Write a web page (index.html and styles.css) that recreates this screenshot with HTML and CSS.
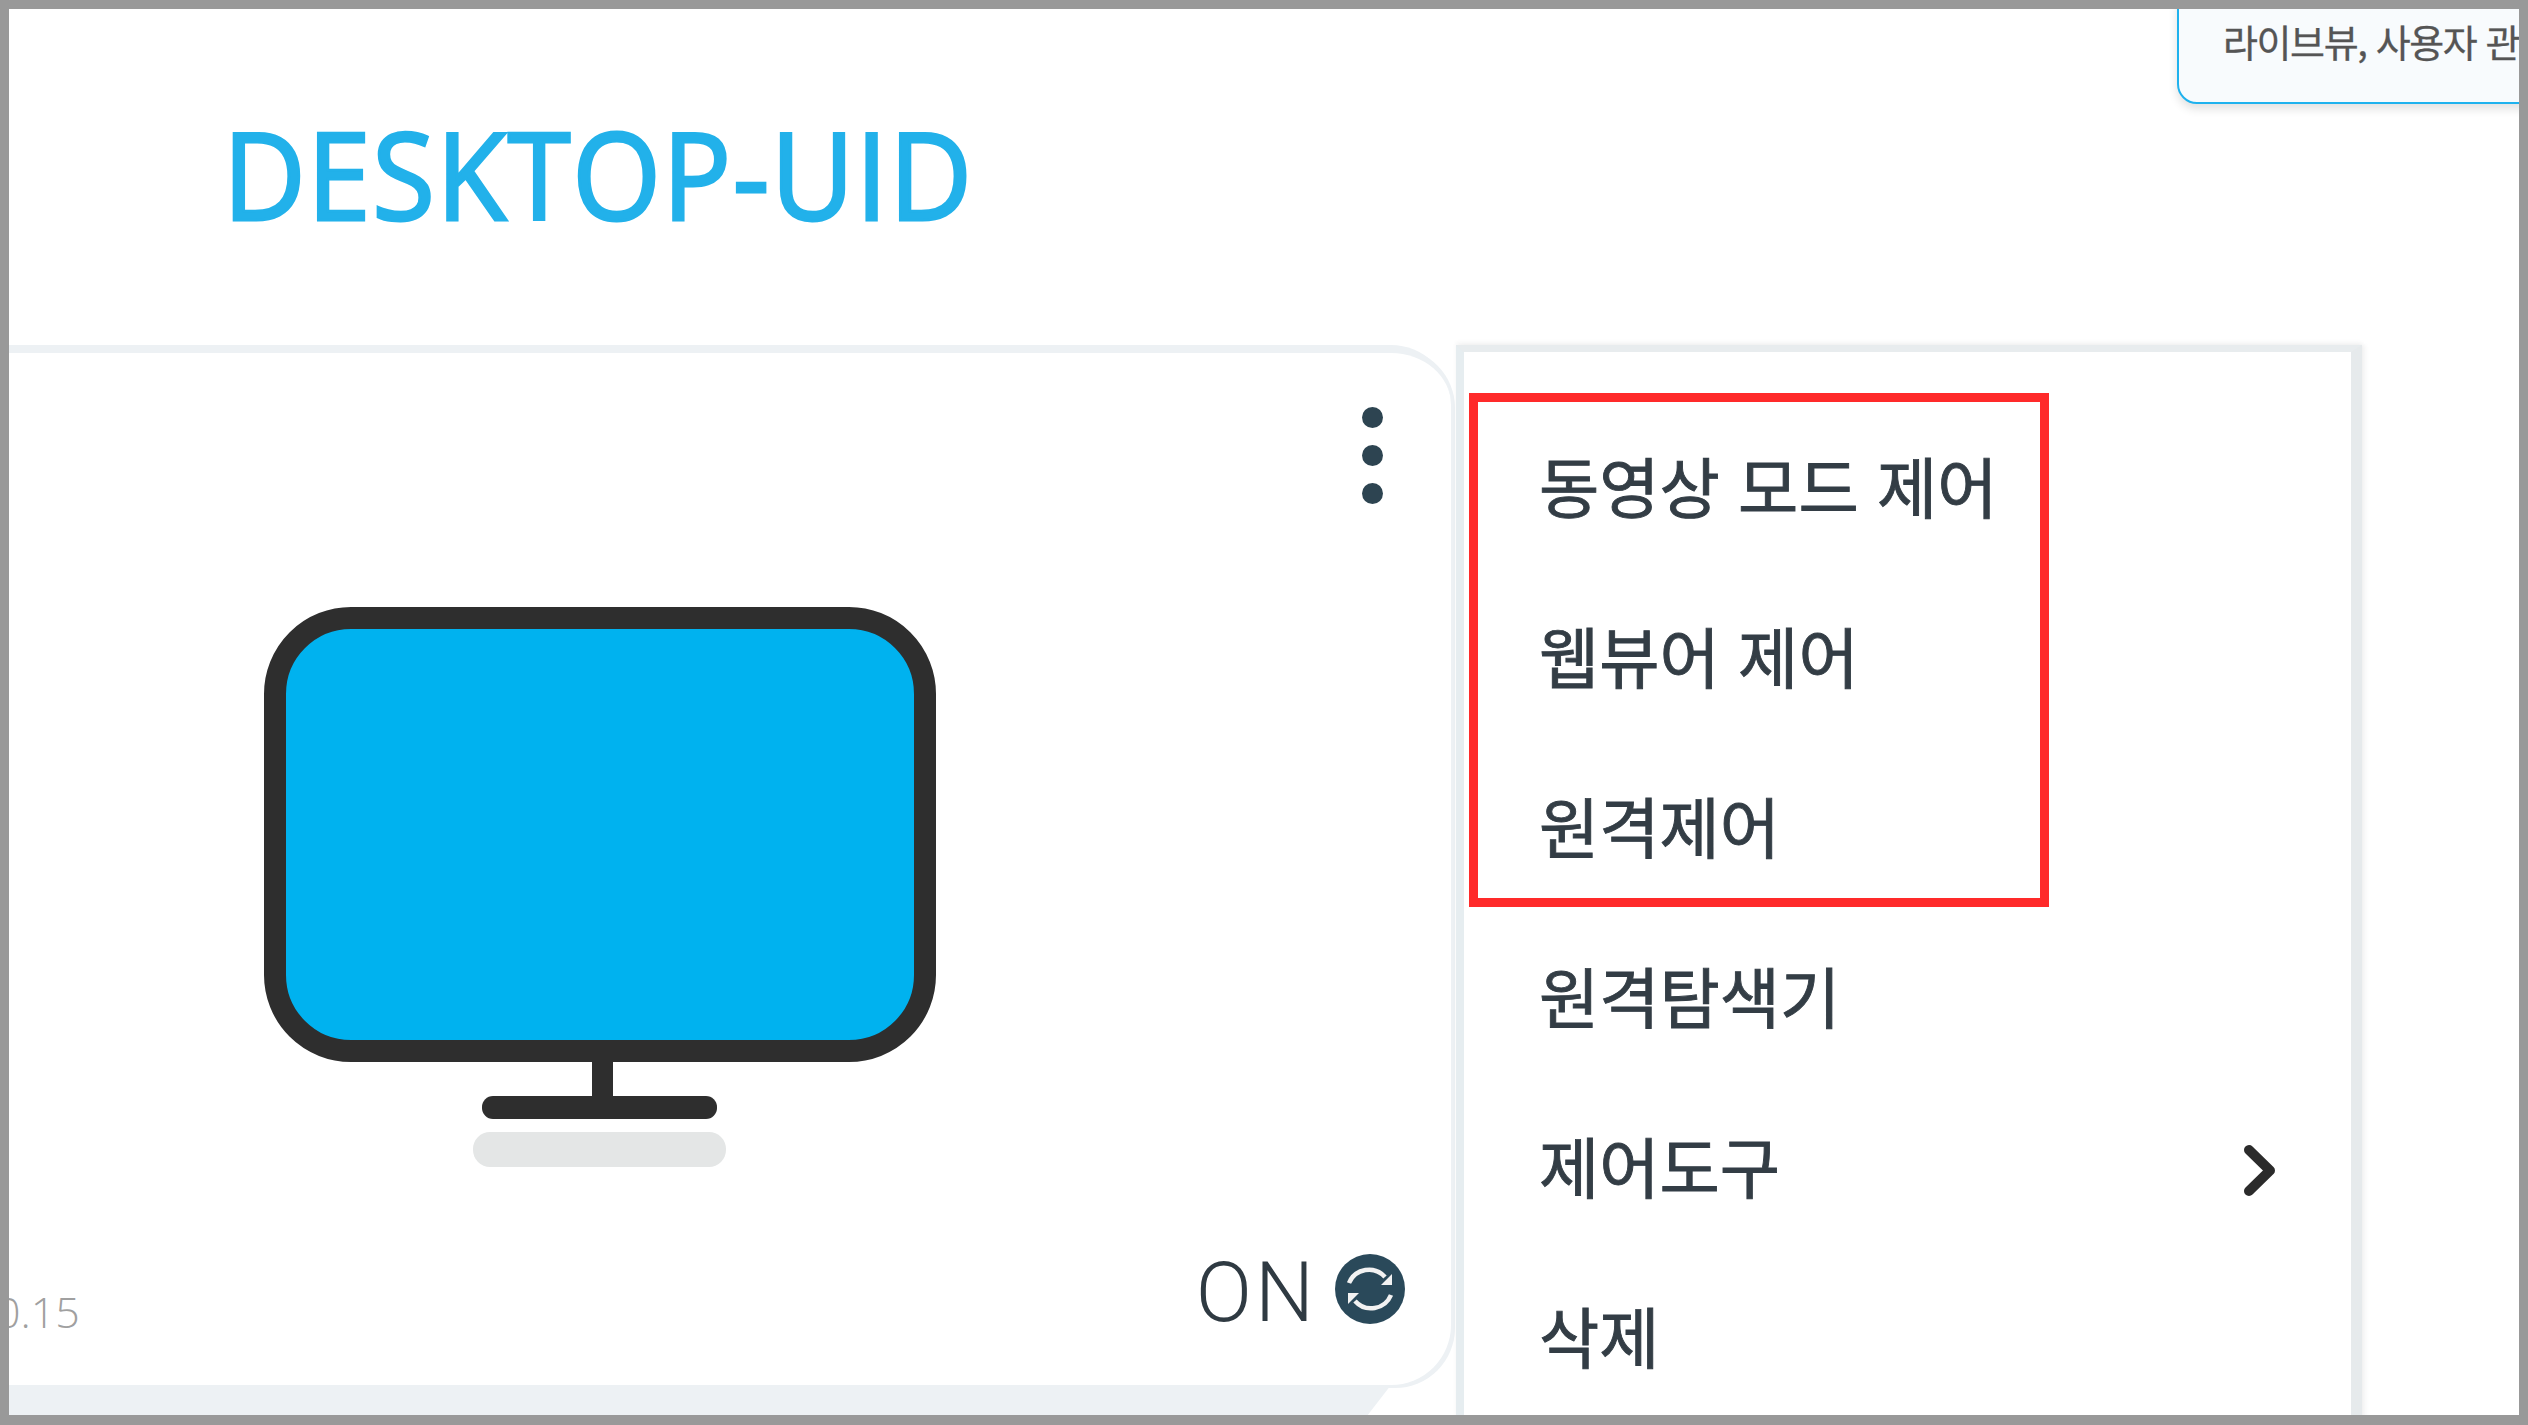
FILE: index.html
```html
<!DOCTYPE html>
<html lang="ko">
<head>
    <meta charset="UTF-8">
    <title>DESKTOP-UID</title>
    <link rel="stylesheet" href="styles.css">
</head>
<body>
    <div class="frame">
        <div class="tooltip">라이브뷰, 사용자 관리</div>
        <div class="header">
            <h1 class="device-name">DESKTOP-UID</h1>
        </div>
        <div class="content">
            <div class="device-card">
                <div class="kebab"><span></span><span></span><span></span></div>
                <svg class="monitor" viewBox="0 0 672 560" width="672" height="560">
                    <rect x="11" y="11" width="650" height="433" rx="76" fill="#00b2ef" stroke="#2e2e2e" stroke-width="22"/>
                    <rect x="328" y="450" width="21" height="44" fill="#2e2e2e"/>
                    <rect x="218" y="489" width="235" height="23" rx="11" fill="#2e2e2e"/>
                    <rect x="209" y="525" width="253" height="35" rx="17" fill="#e4e6e6"/>
                </svg>
                <div class="card-footer">
                    <span class="ip">0.15</span>
                    <div class="status">
                        <span class="status-text">ON</span>
                        <svg class="refresh" viewBox="0 0 70 70" width="70" height="70">
                            <circle cx="35" cy="35" r="35" fill="#2a495a"/>
                            <path d="M14 29A21.500 21.500 0 0 1 50 23" fill="none" stroke="#f2f2f2" stroke-width="4.500"/>
                            <path d="M56 41A21.500 21.500 0 0 1 20 47" fill="none" stroke="#f2f2f2" stroke-width="4.500"/>
                            <path d="M57 20v11h-11z" fill="#f2f2f2"/>
                            <path d="M13 50v-11h11z" fill="#f2f2f2"/>
                        </svg>
                    </div>
                </div>
            </div>
            <div class="menu">
                <div class="highlight"></div>
                <div class="menu-item">동영상 모드 제어</div>
                <div class="menu-item">웹뷰어 제어</div>
                <div class="menu-item">원격제어</div>
                <div class="menu-item">원격탐색기</div>
                <div class="menu-item">
                    제어도구
                    <svg class="chevron" viewBox="0 0 33 51" width="33" height="51">
                        <path d="M6 5l21 20.500-21 20.500" fill="none" stroke="#2b2b2b" stroke-width="10" stroke-linecap="round" stroke-linejoin="round"/>
                    </svg>
                </div>
                <div class="menu-item">삭제</div>
            </div>
        </div>
    </div>
</body>
</html>
```

FILE: styles.css
```css
html, body {
    margin: 0;
    padding: 0;
}
body {
    width: 2528px;
    height: 1425px;
    overflow: hidden;
    background-color: #999;
    font-family: "Noto Sans CJK KR", "Noto Sans", sans-serif;
}
.frame {
    position: relative;
    margin: 9px 0 0 9px;
    width: 2510px;
    height: 1406px;
    overflow: hidden;
    background-color: #fff;
}
.tooltip {
    position: absolute;
    top: -20px;
    left: 2168px;
    width: 420px;
    height: 115px;
    box-sizing: border-box;
    padding: 28px 0 0 44px;
    background-color: #f8fbfd;
    border: 2px solid #1fb2ee;
    border-radius: 20px;
    box-shadow: 0 5px 10px rgba(0,0,0,0.12);
    color: #555;
    font-size: 38px;
    line-height: 44px;
    letter-spacing: -1.4px;
    white-space: nowrap;
    -webkit-text-stroke: 0.3px #555;
}
.header {
    height: 336px;
    padding-left: 214px;
}
.device-name {
    margin: 0;
    padding-top: 90px;
    color: #22b1ea;
    font-family: "Open Sans", sans-serif;
    font-size: 120px;
    font-weight: 400;
    line-height: 150px;
    letter-spacing: 1.7px;
    -webkit-text-stroke: 3px #22b1ea;
    transform: scaleX(0.95);
    transform-origin: left center;
}
.content {
    display: flex;
    align-items: flex-start;
}
.device-card {
    position: relative;
    flex: none;
    width: 1522px;
    height: 1040px;
    margin-left: -80px;
    box-sizing: border-box;
    background-color: #fff;
    border-top: 8px solid #edf1f4;
    border-radius: 0 60px 60px 0;
    box-shadow: 4px 3px 0 #edf1f4;
}
/* band under the card, runs off the bottom of the shot */
.device-card::after {
    content: "";
    position: absolute;
    top: 100%;
    left: 0;
    right: 60px;
    height: 31px;
    background-color: #edf1f4;
    clip-path: polygon(0 0, 100% 0, calc(100% - 24px) 100%, 0 100%);
}
.kebab {
    position: absolute;
    top: 54px;
    right: 68px;
    display: flex;
    flex-direction: column;
    gap: 17px;
}
.kebab span {
    width: 21px;
    height: 21px;
    border-radius: 50%;
    background-color: #2d4451;
}
.monitor {
    display: block;
    margin: 254px 0 0 335px;
}
.card-footer {
    display: flex;
    justify-content: space-between;
    align-items: center;
    margin-top: 87px;
    padding: 0 46px 0 67px;
}
.ip {
    align-self: flex-end;
    margin-bottom: -17px;
    color: #a0a0a0;
    font-family: "Open Sans", sans-serif;
    font-size: 43px;
    font-weight: 300;
    line-height: 58px;
}
.status {
    display: flex;
    align-items: center;
    gap: 18px;
}
.status-text {
    padding-top: 8px;
    color: #2f3a42;
    font-family: Roboto, sans-serif;
    font-size: 83px;
    font-weight: 300;
    line-height: 62px;
    letter-spacing: 3px;
}
.menu {
    position: relative;
    flex: none;
    width: 887px;
    height: 1100px;
    margin-left: 5px;
    padding-top: 47px;
    background-color: #fff;
    border-top: 7px solid #e8ecee;
    border-left: 8px solid #e6edf0;
    border-right: 11px solid #e6eaec;
    box-shadow: 4px 0 4px rgba(0,0,0,0.04), 0 -3px 4px rgba(0,0,0,0.04);
}
.menu-item {
    display: flex;
    justify-content: space-between;
    align-items: center;
    height: 170px;
    padding: 0 75px;
    color: #333d45;
    font-size: 65.5px;
    white-space: nowrap;
    -webkit-text-stroke: 0.9px #333d45;
}
.chevron {
    margin-top: 12px;
}
.highlight {
    position: absolute;
    top: 41px;
    left: 5px;
    width: 562px;
    height: 496px;
    border: 9px solid #ff2a2a;
}
```
